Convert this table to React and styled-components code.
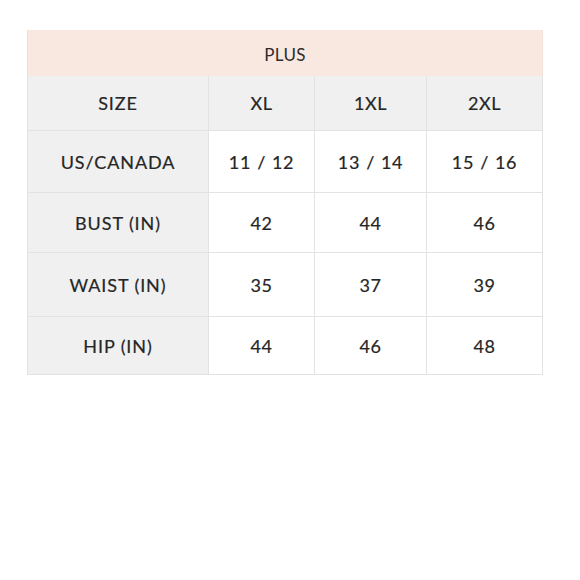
import React from "react";
import styled, { createGlobalStyle } from "styled-components";

const Global = createGlobalStyle`
  html, body { margin: 0; padding: 0; background: #fff; }
  body { font-family: Lato, "Noto Sans", sans-serif; }
`;

const Page = styled.div`
  width: 580px;
  height: 580px;
  padding: 30px 0 0 27px;
  box-sizing: border-box;
`;

const Grid = styled.div`
  display: grid;
  width: 515px;
  grid-template-columns: 181px 106px 112px 116px;
  grid-template-rows: 46px 55px 62px 60px 64px 58px;
  border-left: 1px solid #e3e3e3;
  box-sizing: border-box;
`;

const Banner = styled.div`
  grid-column: 1 / -1;
  background: #f8e8e0;
  color: #2c2c2c;
  display: flex;
  align-items: center;
  justify-content: center;
  font-size: 17px;
  letter-spacing: 0.3px;
  padding-top: 2px;
  border-right: 1px solid #efe2dc;
`;

const Cell = styled.div`
  display: flex;
  align-items: center;
  justify-content: center;
  background: ${(p) => (p.$shade ? "#f0f0f0" : "#ffffff")};
  border-right: 1px solid #e3e3e3;
  border-bottom: 1px solid #e3e3e3;
  color: #262626;
  font-size: 18px;
  letter-spacing: ${(p) => (p.$label ? "0.9px" : "0.6px")};
  word-spacing: ${(p) => (p.$label ? "0" : "1px")};
  -webkit-text-stroke: 0.2px #262626;
  box-sizing: border-box;
`;

const rows = [
  ["SIZE", "XL", "1XL", "2XL"],
  ["US/CANADA", "11 / 12", "13 / 14", "15 / 16"],
  ["BUST (IN)", "42", "44", "46"],
  ["WAIST (IN)", "35", "37", "39"],
  ["HIP (IN)", "44", "46", "48"],
];

export default function App() {
  return (
    <>
      <Global />
      <Page>
        <Grid>
          <Banner>PLUS</Banner>
          {rows.map((r, i) =>
            r.map((v, j) => (
              <Cell key={`${i}-${j}`} $shade={i === 0 || j === 0} $label={j === 0}>
                {v}
              </Cell>
            ))
          )}
        </Grid>
      </Page>
    </>
  );
}
